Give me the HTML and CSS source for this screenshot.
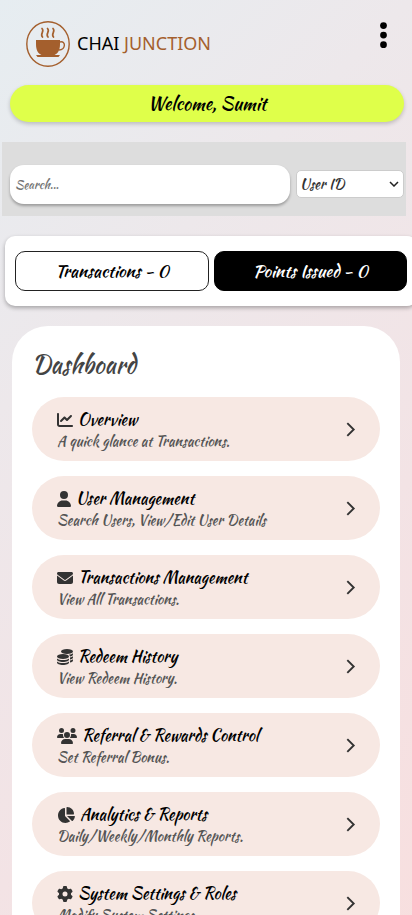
FILE: index.html
```html
<!DOCTYPE html>
<html lang="en">
<head>
<meta charset="utf-8">
<meta name="viewport" content="width=device-width, initial-scale=1">
<title>Chai Junction</title>
<link rel="stylesheet" href="styles.css">
</head>
<body>
<header class="header">
  <a class="brand" href="#">
    <svg class="brand-mark" viewBox="0 0 44 46" aria-hidden="true">
      <ellipse cx="22" cy="23" rx="21.200" ry="22.200" fill="none" stroke="#a45f2d" stroke-width="1.400"/>
      <path fill="#a45f2d" d="M10 19h24v4c0 6-2 9.500-5.500 11h-13C12 32.500 10 29 10 23zM10 34h24l-1.500 2h-21z"/>
      <path fill="none" stroke="#a45f2d" stroke-width="1.400" d="M34 21c6-2 6 8-1 8"/>
      <path fill="none" stroke="#a45f2d" stroke-width="1.700" stroke-linecap="round" d="M16 7.500c3 3-2.500 5 .5 8.500M21.500 7.500c3 3-2.500 5 .5 8.500M27 7.500c3 3-2.500 5 .5 8.500"/>
    </svg>
    <span class="brand-name">CHAI <span class="brand-accent">JUNCTION</span></span>
  </a>
  <button class="menu" type="button" aria-label="Menu">
    <svg viewBox="0 0 8 24" aria-hidden="true"><circle cx="4" cy="4" r="3"/><circle cx="4" cy="12.500" r="3"/><circle cx="4" cy="21" r="3"/></svg>
  </button>
</header>

<main>
  <h1 class="welcome">Welcome, Sumit</h1>

  <form class="search">
    <input class="search-input" type="search" placeholder="Search..." aria-label="Search">
    <span class="select-wrap">
      <select class="search-type" aria-label="Search by"><option>User ID</option></select>
      <svg class="select-arrow" viewBox="0 0 10 6" aria-hidden="true"><path d="M1 1l4 4 4-4"/></svg>
    </span>
  </form>

  <section class="stats">
    <button class="stat" type="button">Transactions - 0</button>
    <button class="stat stat-dark" type="button">Points Issued - 0</button>
  </section>

  <section class="dashboard">
    <h2 class="dashboard-title">Dashboard</h2>
    <nav class="items">
      <a class="item" href="#">
        <span class="item-text"><span class="item-title"><svg class="icon" viewBox="0 0 512 512" aria-hidden="true"><path d="M64 64c0-17.700-14.300-32-32-32S0 46.300 0 64V400c0 44.200 35.800 80 80 80H480c17.700 0 32-14.300 32-32s-14.300-32-32-32H80c-8.800 0-16-7.200-16-16V64zm406.600 86.600c12.500-12.500 12.500-32.800 0-45.300s-32.800-12.500-45.300 0L320 210.700l-57.400-57.400c-12.500-12.500-32.800-12.500-45.300 0l-112 112c-12.500 12.500-12.500 32.800 0 45.300s32.800 12.500 45.300 0L240 221.300l57.400 57.400c12.500 12.500 32.800 12.500 45.300 0l128-128z"/></svg>Overview</span>
        <span class="item-note">A quick glance at Transactions.</span></span>
        <svg class="chevron" viewBox="0 0 10 16" aria-hidden="true"><path d="M2 2l6 6-6 6"/></svg>
      </a>
      <a class="item" href="#">
        <span class="item-text"><span class="item-title"><svg class="icon" viewBox="0 0 448 512" aria-hidden="true"><path d="M224 256A128 128 0 1 0 224 0a128 128 0 1 0 0 256zm-45.700 48C79.800 304 0 383.800 0 482.300C0 498.700 13.300 512 29.700 512H418.300c16.400 0 29.700-13.300 29.700-29.700C448 383.800 368.200 304 269.700 304H178.300z"/></svg>User Management</span>
        <span class="item-note">Search Users, View/Edit User Details</span></span>
        <svg class="chevron" viewBox="0 0 10 16" aria-hidden="true"><path d="M2 2l6 6-6 6"/></svg>
      </a>
      <a class="item" href="#">
        <span class="item-text"><span class="item-title"><svg class="icon" viewBox="0 0 512 512" aria-hidden="true"><path d="M48 64C21.500 64 0 85.500 0 112c0 15.100 7.100 29.300 19.200 38.400L236.800 313.600c11.400 8.500 27 8.500 38.400 0L492.800 150.400c12.100-9.100 19.200-23.300 19.200-38.400c0-26.500-21.500-48-48-48H48zM0 176V384c0 35.300 28.700 64 64 64H448c35.300 0 64-28.700 64-64V176L294.400 339.200c-22.800 17.100-54 17.100-76.800 0L0 176z"/></svg>Transactions Management</span>
        <span class="item-note">View All Transactions.</span></span>
        <svg class="chevron" viewBox="0 0 10 16" aria-hidden="true"><path d="M2 2l6 6-6 6"/></svg>
      </a>
      <a class="item" href="#">
        <span class="item-text"><span class="item-title"><svg class="icon" viewBox="0 0 512 512" aria-hidden="true"><ellipse cx="320" cy="80" rx="192" ry="80"/><ellipse cx="192" cy="240" rx="192" ry="80"/><path d="M0 300c40 35 110 52 192 52s152-17 192-52v36c0 44-86 80-192 80S0 380 0 336zM0 396c40 35 110 52 192 52s152-17 192-52v36c0 44-86 80-192 80S0 476 0 432zM512 138v38c0 28-35 50-92 64-5-24-20-43-42-57 57-6 106-22 134-45zM512 234v38c0 28-37 52-96 67v-66c42-9 75-22 96-39zM512 330v38c0 28-37 52-96 67v-66c42-9 75-22 96-39z"/></svg>Redeem History</span>
        <span class="item-note">View Redeem History.</span></span>
        <svg class="chevron" viewBox="0 0 10 16" aria-hidden="true"><path d="M2 2l6 6-6 6"/></svg>
      </a>
      <a class="item" href="#">
        <span class="item-text"><span class="item-title"><svg class="icon" viewBox="0 0 640 512" aria-hidden="true"><path d="M144 0a80 80 0 1 1 0 160A80 80 0 1 1 144 0zM512 0a80 80 0 1 1 0 160A80 80 0 1 1 512 0zM0 298.700C0 239.800 47.800 192 106.700 192h42.700c15.900 0 31 3.500 44.600 9.700c-1.300 7.200-1.900 14.700-1.900 22.300c0 38.200 16.800 72.500 43.300 96H21.300C9.600 320 0 310.400 0 298.700zM405.300 320c26.600-23.500 43.300-57.800 43.300-96c0-7.600-.7-15-1.900-22.300c13.600-6.300 28.700-9.700 44.600-9.700h42.700C592.200 192 640 239.800 640 298.700c0 11.800-9.600 21.300-21.300 21.300H405.300zM224 224a96 96 0 1 1 192 0 96 96 0 1 1 -192 0zM128 485.300C128 411.700 187.700 352 261.300 352H378.700C452.300 352 512 411.700 512 485.300c0 14.700-11.900 26.700-26.700 26.700H154.700c-14.700 0-26.700-11.900-26.700-26.700z"/></svg>Referral &amp; Rewards Control</span>
        <span class="item-note">Set Referral Bonus.</span></span>
        <svg class="chevron" viewBox="0 0 10 16" aria-hidden="true"><path d="M2 2l6 6-6 6"/></svg>
      </a>
      <a class="item" href="#">
        <span class="item-text"><span class="item-title"><svg class="icon" viewBox="0 0 576 512" aria-hidden="true"><path d="M304 240V16.600c0-9 7-16.600 16-16.600C443.700 0 544 100.300 544 224c0 9-7.600 16-16.600 16H304zM32 272C32 150.700 122.100 50.300 239 34.300c9.200-1.300 17 6.100 17 15.400V288L412.500 444.500c6.700 6.700 6.200 17.700-1.500 23.100C371.800 495.600 323.800 512 272 512C139.500 512 32 404.600 32 272zm526.400 16c9.300 0 16.600 7.800 15.400 17c-7.700 55.900-34.600 105.600-73.900 142.300c-6 5.600-15.400 5.200-21.200-.7L320 288H558.400z"/></svg>Analytics &amp; Reports</span>
        <span class="item-note">Daily/Weekly/Monthly Reports.</span></span>
        <svg class="chevron" viewBox="0 0 10 16" aria-hidden="true"><path d="M2 2l6 6-6 6"/></svg>
      </a>
      <a class="item" href="#">
        <span class="item-text"><span class="item-title"><svg class="icon" viewBox="0 0 512 512" aria-hidden="true"><path d="M495.900 166.600c3.200 8.700 .5 18.400-6.400 24.600l-43.300 39.400c1.100 8.300 1.700 16.800 1.700 25.400s-.6 17.100-1.700 25.400l43.300 39.400c6.900 6.200 9.600 15.900 6.400 24.600c-4.400 11.900-9.700 23.300-15.800 34.300l-4.700 8.100c-6.600 11-14 21.400-22.100 31.200c-5.900 7.200-15.700 9.600-24.500 6.800l-55.700-17.700c-13.400 10.300-28.200 18.900-44 25.400l-12.500 57.100c-2 9.100-9 16.300-18.200 17.800c-13.800 2.300-28 3.500-42.500 3.500s-28.700-1.200-42.500-3.500c-9.200-1.500-16.200-8.700-18.200-17.800l-12.500-57.100c-15.800-6.500-30.600-15.100-44-25.400L83.100 425.900c-8.800 2.800-18.600 .3-24.500-6.800c-8.100-9.800-15.500-20.200-22.100-31.200l-4.700-8.100c-6.100-11-11.400-22.400-15.800-34.300c-3.200-8.700-.5-18.400 6.400-24.600l43.300-39.400C64.600 273.100 64 264.600 64 256s.6-17.100 1.700-25.400L22.400 191.200c-6.900-6.200-9.600-15.900-6.400-24.600c4.400-11.900 9.700-23.300 15.800-34.300l4.700-8.100c6.600-11 14-21.400 22.100-31.200c5.900-7.200 15.700-9.600 24.500-6.800l55.700 17.700c13.400-10.300 28.200-18.900 44-25.400l12.500-57.100c2-9.100 9-16.300 18.200-17.800C227.300 1.200 241.500 0 256 0s28.700 1.200 42.500 3.500c9.200 1.500 16.200 8.700 18.200 17.800l12.500 57.100c15.800 6.500 30.600 15.100 44 25.400l55.700-17.700c8.800-2.800 18.600-.3 24.500 6.800c8.100 9.800 15.500 20.200 22.100 31.200l4.700 8.100c6.100 11 11.400 22.400 15.800 34.300zM256 336a80 80 0 1 0 0-160 80 80 0 1 0 0 160z"/></svg>System Settings &amp; Roles</span>
        <span class="item-note">Modify System Settings.</span></span>
        <svg class="chevron" viewBox="0 0 10 16" aria-hidden="true"><path d="M2 2l6 6-6 6"/></svg>
      </a>
    </nav>
  </section>
</main>
</body>
</html>
```
FILE: styles.css
```css
* {
  box-sizing: border-box;
}

body {
  margin: 0;
  min-height: 100vh;
  overflow-x: hidden;
  background: linear-gradient(135deg, #e6edf1, #ede8eb 30%, #f3e3e5 65%, #f8dfdf);
  color: #000;
  font-family: "Kaushan Script", Lato, sans-serif;
}

button,
input,
select {
  font: inherit;
}

.header {
  display: flex;
  justify-content: space-between;
  align-items: flex-start;
  padding: 21px 24px 18px 26px;
}

.brand {
  display: flex;
  align-items: center;
  gap: 7px;
  color: #000;
  text-decoration: none;
}

.brand-mark {
  width: 44px;
  height: 46px;
}

.brand-name {
  padding-bottom: 2px;
  font: 18px/24px "Noto Sans", sans-serif;
}

.brand-accent {
  color: #a45f2d;
}

.menu {
  padding: 0;
  border: 0;
  background: none;
}

.menu svg {
  display: block;
  width: 9px;
  height: 27px;
}

.welcome {
  margin: 0 8px 20px 10px;
  border-radius: 19px;
  background: #dfff4a;
  box-shadow: 0 2px 4px rgba(0, 0, 0, 0.2);
  font-size: 18px;
  font-weight: 500;
  line-height: 37px;
  text-align: center;
}

.search {
  display: flex;
  align-items: center;
  gap: 6px;
  height: 74px;
  margin: 0 6px 20px 2px;
  padding: 10px 2px 6px 8px;
  background: #ddd;
}

.search-input {
  flex: 1;
  min-width: 0;
  height: 39px;
  margin-top: 6px;
  padding: 0 5px;
  border: 0;
  border-radius: 14px;
  background: #fff;
  box-shadow: 0 2px 3px rgba(0, 0, 0, 0.3);
  appearance: none;
  font-size: 12px;
}

.search-input::placeholder {
  color: #757575;
}

.select-wrap {
  position: relative;
  width: 108px;
  margin-top: 6px;
}

.search-type {
  display: block;
  width: 100%;
  height: 28px;
  padding: 0 3px;
  border: 1px solid #ccc;
  border-radius: 5px;
  background: #fff;
  color: #333;
  appearance: none;
  font-size: 14px;
}

.select-arrow {
  position: absolute;
  top: 11px;
  right: 5px;
  width: 10px;
  height: 6px;
  fill: none;
  stroke: #222;
  stroke-width: 1.5;
  pointer-events: none;
}

.stats {
  display: grid;
  grid-template-columns: 1fr 1fr;
  gap: 5px;
  margin: 0 -5px 20px 5px;
  padding: 15px 10px;
  border-radius: 10px;
  background: #fff;
  box-shadow: 0 2px 4px rgba(0, 0, 0, 0.3);
}

.stat {
  height: 40px;
  border: 1px solid #222;
  border-radius: 10px;
  background: #fff;
  color: #000;
  font-size: 17px;
  font-weight: 500;
}

.stat-dark {
  border-color: #000;
  background: #000;
  color: #fff;
}

.dashboard {
  margin: 0 12px;
  padding: 20px;
  border-radius: 36px;
  background: #fff;
}

.dashboard-title {
  margin: 0 0 13px;
  color: #444;
  font-size: 24px;
  font-weight: 400;
  line-height: 38px;
}

.items {
  display: grid;
  gap: 15px;
}

.item {
  display: flex;
  align-items: center;
  justify-content: space-between;
  height: 64px;
  padding: 0 24px 0 25px;
  border-radius: 32px;
  background: #f7e8e3;
  color: #000;
  text-decoration: none;
}

.item-text {
  display: grid;
  padding-top: 2px;
}

.item-title {
  display: flex;
  align-items: center;
  gap: 5px;
  font-size: 16px;
  font-weight: 400;
  line-height: 22px;
}

.item-note {
  color: #555;
  font-size: 14px;
  line-height: 20px;
}

.icon {
  height: 16px;
  fill: #333;
}

.chevron {
  width: 11px;
  height: 17px;
  fill: none;
  stroke: #333;
  stroke-width: 1.8;
}
```
